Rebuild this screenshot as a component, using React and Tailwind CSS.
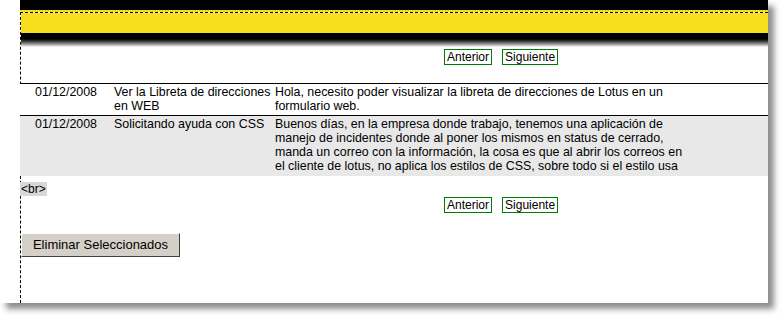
import React from "react";

const font = { fontFamily: '"Liberation Sans", Arial, sans-serif' };

const rows = [
  {
    date: "01/12/2008",
    subject: "Ver la Libreta de direcciones en WEB",
    body: "Hola, necesito poder visualizar la libreta de direcciones de Lotus en un formulario web.",
    h: "h-[32px]",
    bg: "bg-white",
  },
  {
    date: "01/12/2008",
    subject: "Solicitando ayuda con CSS",
    body: "Buenos días, en la empresa donde trabajo, tenemos una aplicación de manejo de incidentes donde al poner los mismos en status de cerrado, manda un correo con la información, la cosa es que al abrir los correos en el cliente de lotus, no aplica los estilos de CSS, sobre todo si el estilo usa",
    h: "h-[60px]",
    bg: "bg-[#e8e8e8]",
  },
];

const Pager = ({ className }) => (
  <div className={`flex gap-[10px] pl-[423px] text-[12px] leading-[14px] text-black ${className}`}>
    <span className="border border-[#007a00] px-[2px]">Anterior</span>
    <span className="border border-[#007a00] px-[2px]">Siguiente</span>
  </div>
);

export default function App() {
  return (
    <div className="w-[784px] h-[320px] bg-white" style={font}>
      <div className="w-[768px] h-[303px] bg-white pl-[20px] flex flex-col shadow-[6px_6px_6px_rgba(0,0,0,0.45)] overflow-hidden">
        <div className="h-[10px] bg-black shrink-0" />
        <div className="h-[2px] bg-[#f6de1c] shrink-0" />
        <div className="flex-1 flex flex-col border-l border-t border-dashed border-black">
          <div className="h-[20px] bg-[#f6de1c] shrink-0" />
          <div className="h-[5px] bg-black shrink-0" />
          <div className="h-[9px] bg-linear-to-b from-black to-white shrink-0" />

          <Pager className="mt-[2px]" />

          <div className="-ml-px mt-[18px] border-t border-black">
            {rows.map((r, i) => (
              <div
                key={i}
                className={`flex ${r.h} ${r.bg} overflow-hidden pt-[1px] text-[12.4px] leading-[14px] text-black ${i === 0 ? "border-b border-black" : ""}`}
              >
                <div className="w-[94px] pl-[15px] shrink-0">{r.date}</div>
                <div className="w-[161px] shrink-0">{r.subject}</div>
                <div className="w-[412px] shrink-0">{r.body}</div>
              </div>
            ))}
          </div>

          <div className="-ml-px mt-[6px] self-start bg-[#d8d8d8] text-[12px] leading-[14px] px-[1px] text-black">
            {"<br>"}
          </div>

          <Pager className="mt-[1px]" />

          <div className="mt-[19px]">
            <button className="h-[24px] w-[159px] bg-[#d4d0c8] border border-t-white border-l-white border-r-[#404040] border-b-[#404040] text-[13px] text-black leading-none">
              Eliminar Seleccionados
            </button>
          </div>
        </div>
      </div>
    </div>
  );
}
